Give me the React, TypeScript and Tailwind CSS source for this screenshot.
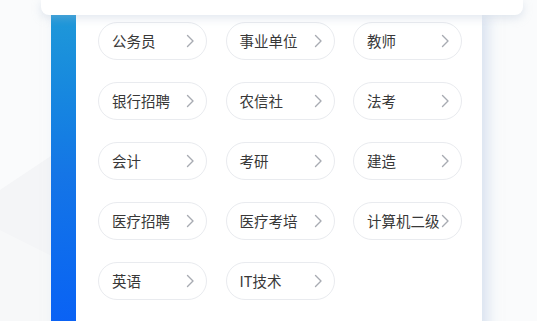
import React from "react"

const items = [
  "公务员", "事业单位", "教师",
  "银行招聘", "农信社", "法考",
  "会计", "考研", "建造",
  "医疗招聘", "医疗考培", "计算机二级",
  "英语", "IT技术",
]

function Chevron() {
  return (
    <svg width="9" height="14" viewBox="0 0 9 14" fill="none" className="shrink-0 ml-auto">
      <path d="M1.5 1.5 L7 7 L1.5 12.5" stroke="#a8abb2" strokeWidth="1.4" strokeLinecap="round" strokeLinejoin="round" />
    </svg>
  )
}

export default function App() {
  return (
    <div
      className="relative w-[537px] h-[321px] overflow-hidden bg-[#fafbfc]"
      style={{ fontFamily: '"Noto Sans CJK SC", "Noto Sans", sans-serif' }}
    >
      {/* faint background shapes */}
      <svg className="absolute left-0 top-0" width="537" height="321" viewBox="0 0 537 321">
        <polygon points="0,190 60,150 60,321 0,321" fill="#f4f5f7" />
        <polygon points="0,230 60,260 60,321 0,321" fill="#f7f8f9" />
      </svg>

      <div className="relative flex flex-col">
        <div className="relative z-10 ml-[41px] w-[482px] h-[15px] bg-white rounded-b-lg shadow-[0_3px_10px_rgba(170,185,210,0.35)]" />

        <div className="ml-[51px] w-[431px] h-[320px] flex bg-white shadow-[6px_0_12px_rgba(190,205,230,0.55)]">
          <div className="w-[25px] bg-gradient-to-b from-[#1f98d8] via-[#1575e6] to-[#0a60f6]" />
          <div className="flex-1 pl-[22px] pt-[7px]">
            <div className="grid grid-cols-[109px_109px_109px] gap-x-[18.5px] gap-y-[22px]">
              {items.map((t) => (
                <div
                  key={t}
                  className="h-[38px] rounded-full border border-[#e9ebef] bg-white flex items-center pl-[13px] pr-[11px]"
                >
                  <span className="text-[14.5px] text-[#383838] whitespace-nowrap">{t}</span>
                  <Chevron />
                </div>
              ))}
            </div>
          </div>
        </div>
      </div>
    </div>
  )
}
